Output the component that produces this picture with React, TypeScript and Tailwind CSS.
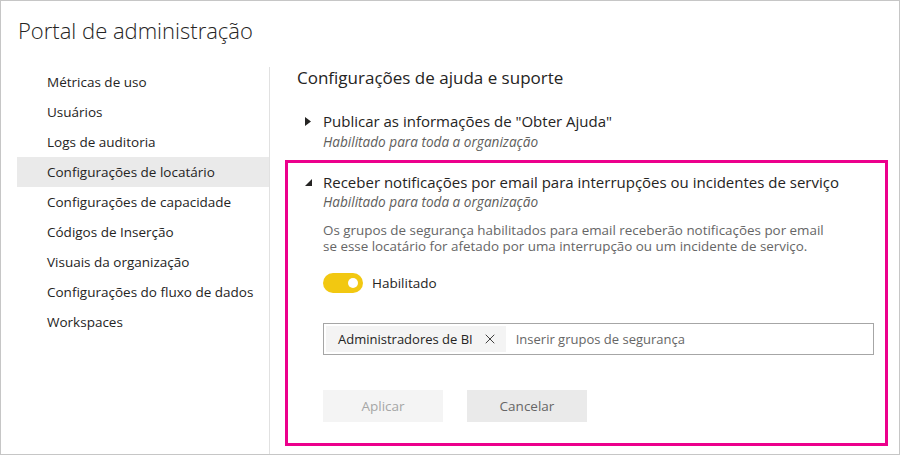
import { X } from "lucide-react";

const menuItems = [
  "Métricas de uso",
  "Usuários",
  "Logs de auditoria",
  "Configurações de locatário",
  "Configurações de capacidade",
  "Códigos de Inserção",
  "Visuais da organização",
  "Configurações do fluxo de dados",
  "Workspaces",
];

// Collapsed / expanded carets like the Power BI admin portal
const CaretRight = () => (
  <svg width="6" height="9" viewBox="0 0 6 9" className="shrink-0">
    <path d="M0 0 L6 4.5 L0 9 Z" fill="#252423" />
  </svg>
);

const CaretDown = () => (
  <svg width="7" height="7" viewBox="0 0 7 7" className="shrink-0">
    <path d="M7 0 L7 7 L0 7 Z" fill="#252423" />
  </svg>
);

export default function App() {
  return (
    <div
      className="w-[900px] h-[455px] bg-white border border-[#c6c6c6] flex flex-col overflow-hidden text-[#252423]"
      style={{ fontFamily: '"Open Sans", "Noto Sans", sans-serif' }}
    >
      <div className="h-[66px] pl-[17px] pt-[13px]">
        <h1 className="text-[22px] leading-[32px] font-light text-[#252423]">Portal de administração</h1>
      </div>

      <div className="flex flex-1 min-h-0">
        {/* Sidebar */}
        <div className="w-[269px] pl-[16px] border-r border-[#e1e1e1]">
          {menuItems.map((item) => (
            <div
              key={item}
              className={`h-[30px] flex items-center pl-[30px] text-[13.5px] ${
                item === "Configurações de locatário" ? "bg-[#eaeaea]" : ""
              }`}
            >
              {item}
            </div>
          ))}
        </div>

        {/* Main */}
        <div className="flex-1 pl-[15px] pr-[11px]">
          <h2 className="pl-[12px] h-[22px] leading-[22px] text-[17px]">Configurações de ajuda e suporte</h2>

          <div className="pl-[20px] pt-[20px] h-[71px]">
            <div className="flex items-center gap-[12px] h-[24px]">
              <CaretRight />
              <span className="text-[15px]">Publicar as informações de "Obter Ajuda"</span>
            </div>
            <div className="pl-[18px] text-[13.6px] italic text-[#605e5c] leading-[18px]">
              Habilitado para toda a organização
            </div>
          </div>

          <div className="border-[3px] border-[#ec008c] h-[286px] pl-[17px] pt-[8px]">
            <div className="flex items-center gap-[11px] h-[22px]">
              <CaretDown />
              <span className="text-[15px]">Receber notificações por email para interrupções ou incidentes de serviço</span>
            </div>
            <div className="pl-[18px]">
              <div className="text-[13.6px] italic text-[#605e5c] leading-[18px]">Habilitado para toda a organização</div>
              <div className="mt-[11px] text-[13.4px] leading-[16px] text-[#666666]">
                <div>Os grupos de segurança habilitados para email receberão notificações por email</div>
                <div>se esse locatário for afetado por uma interrupção ou um incidente de serviço.</div>
              </div>

              <div className="mt-[19px] flex items-center gap-[9px]">
                <div className="w-[40px] h-[20px] rounded-full bg-[#f2c811] flex items-center justify-end pr-[5px]">
                  <div className="w-[10px] h-[10px] rounded-full bg-white" />
                </div>
                <span className="text-[13.5px]">Habilitado</span>
              </div>

              <div className="mt-[30px] mr-[11px] h-[32px] border border-[#a6a6a6] flex items-center px-[2px]">
                <div className="h-[26px] bg-[#f4f4f4] flex items-center pl-[12px] pr-[8px] gap-[9px] text-[13px]">
                  Administradores de BI
                  <X size={16} strokeWidth={1.3} color="#252423" />
                </div>
                <span className="ml-[10px] text-[13px] text-[#666666]">Inserir grupos de segurança</span>
              </div>

              <div className="mt-[35px] flex gap-[24px]">
                <button className="w-[120px] h-[32px] bg-[#f4f4f4] text-[13.5px] text-[#a6a6a6]">Aplicar</button>
                <button className="w-[120px] h-[32px] bg-[#eaeaea] text-[13.5px] text-[#666666]">Cancelar</button>
              </div>
            </div>
          </div>
        </div>
      </div>
    </div>
  );
}
